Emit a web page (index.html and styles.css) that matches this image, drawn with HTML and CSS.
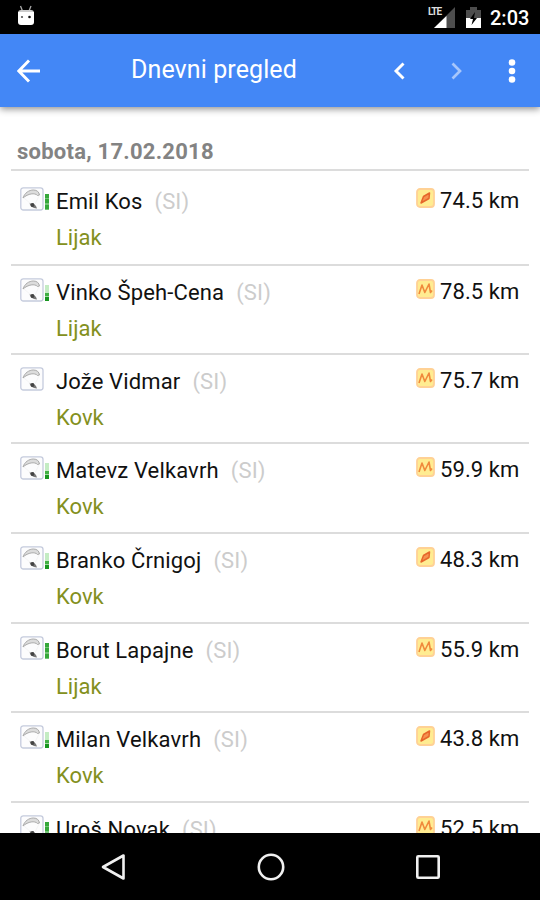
FILE: index.html
```
<!DOCTYPE html>
<html lang="sl">
<head>
<meta charset="utf-8">
<title>Dnevni pregled</title>
<link rel="stylesheet" href="styles.css">
</head>
<body>
<svg class="defs" width="0" height="0">
  <symbol id="glider" viewBox="0 0 24 24">
    <rect x=".8" y=".8" width="22.2" height="22.2" rx="2.500" fill="#fcfcfd" stroke="#c5cbdd" stroke-width="1.3"/>
    <path d="M3 11C4.500 6 9 3 13.500 3c3.500 0 5.500 2 6 5l-2 .5C15 5.500 8 6.500 3 11z" fill="#dcdcdc" stroke="#aaa" stroke-width="1"/>
    <path d="M4 11l7 6M19 9l-4 8" fill="none" stroke="#f0f0f0" stroke-width=".7"/>
    <path d="M9.500 16.500l4 0 2.500 2.500 1 2.500-3-.5-3-1.500z" fill="#777"/>
    <circle cx="12.500" cy="18" r="1.900" fill="#444"/>
  </symbol>
  <symbol id="triangle" viewBox="0 0 19 20">
    <rect x="1" y="1" width="17" height="18" rx="3" fill="#ffec91" stroke="#ffd195" stroke-width="1.800"/>
    <path d="M5 15l2.500-6.500L13.500 5l-.5 5.500z" fill="#f59350" stroke="#e6662b" stroke-width="1.500" stroke-linejoin="round"/>
  </symbol>
  <symbol id="zigzag" viewBox="0 0 19 20">
    <rect x="1" y="1" width="17" height="18" rx="3" fill="#ffec91" stroke="#ffd195" stroke-width="1.800"/>
    <path d="M3 15l3-9 2.800 7.500L13 5l1.500 8.500 1.500-2" fill="none" stroke="#f08a3c" stroke-width="1.600" stroke-linejoin="round"/>
  </symbol>
</svg>
<div class="screen">
  <div class="status">
    <svg class="robot" width="18" height="21" viewBox="0 0 18 21"><path d="M3.500 1l2 5M14 1l-2 5" stroke="#aaa" stroke-width="1.300"/><path d="M1 8q0-3 3-3h10q3 0 3 3z" fill="#ccc"/><path d="M1 7h16v10q0 3-3 3H4q-3 0-3-3z" fill="#fff"/><circle cx="5" cy="12" r="1.100" fill="#555"/><circle cx="12.500" cy="12" r="1.300" fill="#111"/></svg>
    <span class="lte">LTE</span>
    <svg class="signal" width="21" height="21" viewBox="0 0 21 21"><path d="M0 21L21 0v21z" fill="#4d4d4d"/><path d="M0 21L12.500 9v12z" fill="#fff"/><path d="M0 0h9v9H0z" fill="#000"/></svg>
    <svg class="battery" width="15" height="21" viewBox="0 0 15 21"><path d="M0 3h4V0h7v3h4v8H0z" fill="#4d4d4d"/><path d="M0 11h15v10H0z" fill="#fff"/><path d="M9 5L4 12h3l-1.500 6L11 11H8z" fill="#000"/></svg>
    <span class="clock">2:03</span>
  </div>
  <header class="bar">
    <svg class="back" width="24" height="24" viewBox="0 0 24 24"><path d="M23 12H2M12 1.500L1.800 12 12 22.500" fill="none" stroke="#fff" stroke-width="2.900"/></svg>
    <h1>Dnevni pregled</h1>
    <svg class="prev" width="12" height="18" viewBox="0 0 12 18"><path d="M10.500 1.500L3 9l7.500 7.500" fill="none" stroke="#fff" stroke-width="2.900"/></svg>
    <svg class="next" width="12" height="18" viewBox="0 0 12 18"><path d="M1.500 1.500L9 9l-7.500 7.500" fill="none" stroke="#a7c6fb" stroke-width="2.700"/></svg>
    <svg class="more" width="8" height="24" viewBox="0 0 8 24"><g fill="#fff"><circle cx="4" cy="3.500" r="3.300"/><circle cx="4" cy="12" r="3.300"/><circle cx="4" cy="20.500" r="3.300"/></g></svg>
  </header>
  <main>
    <h2><span>sobota, 17.02.2018</span></h2>
    <ul>
      <li><svg class="pic"><use href="#glider"/></svg><i class="meter full"></i><div class="who"><p class="name">Emil Kos<small>(SI)</small></p><p class="site">Lijak</p></div><svg class="kind"><use href="#triangle"/></svg><span class="km">74.5 km</span></li>
      <li><svg class="pic"><use href="#glider"/></svg><i class="meter half"></i><div class="who"><p class="name">Vinko Špeh-Cena<small>(SI)</small></p><p class="site">Lijak</p></div><svg class="kind"><use href="#zigzag"/></svg><span class="km">78.5 km</span></li>
      <li><svg class="pic"><use href="#glider"/></svg><i class="meter"></i><div class="who"><p class="name">Jože Vidmar<small>(SI)</small></p><p class="site">Kovk</p></div><svg class="kind"><use href="#zigzag"/></svg><span class="km">75.7 km</span></li>
      <li><svg class="pic"><use href="#glider"/></svg><i class="meter half"></i><div class="who"><p class="name">Matevz Velkavrh<small>(SI)</small></p><p class="site">Kovk</p></div><svg class="kind"><use href="#zigzag"/></svg><span class="km">59.9 km</span></li>
      <li><svg class="pic"><use href="#glider"/></svg><i class="meter half"></i><div class="who"><p class="name">Branko Črnigoj<small>(SI)</small></p><p class="site">Kovk</p></div><svg class="kind"><use href="#triangle"/></svg><span class="km">48.3 km</span></li>
      <li><svg class="pic"><use href="#glider"/></svg><i class="meter full"></i><div class="who"><p class="name">Borut Lapajne<small>(SI)</small></p><p class="site">Lijak</p></div><svg class="kind"><use href="#zigzag"/></svg><span class="km">55.9 km</span></li>
      <li><svg class="pic"><use href="#glider"/></svg><i class="meter half"></i><div class="who"><p class="name">Milan Velkavrh<small>(SI)</small></p><p class="site">Kovk</p></div><svg class="kind"><use href="#triangle"/></svg><span class="km">43.8 km</span></li>
      <li><svg class="pic"><use href="#glider"/></svg><i class="meter full"></i><div class="who"><p class="name">Uroš Novak<small>(SI)</small></p></div><svg class="kind"><use href="#zigzag"/></svg><span class="km">52.5 km</span></li>
    </ul>
  </main>
  <nav>
    <svg width="26" height="28" viewBox="0 0 26 28"><path d="M23.500 2.500v23L3 14z" fill="none" stroke="#f0f0f0" stroke-width="2.600" stroke-linejoin="round"/></svg>
    <svg width="28" height="28" viewBox="0 0 28 28"><circle cx="14" cy="14" r="12.200" fill="none" stroke="#f0f0f0" stroke-width="2.600"/></svg>
    <svg width="26" height="26" viewBox="0 0 26 26"><rect x="2.300" y="2.300" width="21.400" height="21.400" rx="1" fill="none" stroke="#f0f0f0" stroke-width="2.600"/></svg>
  </nav>
</div>
</body>
</html>
```
FILE: styles.css
```
* { box-sizing: border-box; margin: 0; padding: 0; }
body { font-family: Roboto, sans-serif; background: #fff; }
.defs { position: absolute; }
svg { flex: none; display: block; }
.screen { width: 540px; height: 900px; display: flex; flex-direction: column; overflow: hidden; }
.status { height: 34px; flex: none; background: #000; display: flex; align-items: flex-start; padding: 0 11px 0 17px; color: #fff; }
.robot { margin-top: 5px; }
.lte { margin-left: auto; margin-top: 6px; font-size: 10px; line-height: 12px; font-weight: 700; width: 14px; margin-right: -8px; letter-spacing: -1px; position: relative; z-index: 1; color: #ddd; }
.signal { margin-top: 7px; }
.battery { margin: 7px 0 0 11px; }
.clock { width: 39px; margin: 6px 0 0 9px; font-size: 20px; line-height: 24px; font-weight: 500; white-space: nowrap; }
.bar { height: 73px; flex: none; background: #4387f6; display: flex; align-items: center; padding: 0 24px 0 17px; box-shadow: 0 2px 7px rgba(0,0,0,.45); z-index: 1; color: #fff; }
.bar h1 { font-size: 25px; line-height: 30px; font-weight: 400; letter-spacing: .1px; margin: -1px 0 0 90px; width: 166px; white-space: nowrap; }
.prev { margin-left: 96px; }
.next { margin-left: 46px; }
.more { margin-left: auto; }
main { flex: 1; min-height: 0; overflow: hidden; padding: 0 11px; }
h2 { height: 62px; padding: 32px 0 0 6px; font-size: 22px; line-height: 26px; font-weight: 700; letter-spacing: .25px; color: #838383; white-space: nowrap; }
ul { list-style: none; }
li { height: 89.7px; border-top: 2px solid #dcdcdc; padding: 12px 9px 0; display: flex; align-items: flex-start; }
li:first-child { height: 94.500px; padding-top: 16px; }
li:nth-child(2) { height: 89px; }
.pic { width: 24px; height: 24px; }
.meter { width: 4px; height: 16px; margin: 7px 7px 0 1px; }
.full { background: repeating-linear-gradient(#36a83b 0 4px, #74c577 4px 5.300px); }
.half { background: linear-gradient(#c4ecc3 0 8px, #41b045 8px 11px, #a2d9a2 11px 12px, #189620 12px); }
.name, .site { font-size: 22px; line-height: 36px; white-space: nowrap; }
.name { color: #111; margin-top: -3px; letter-spacing: .14px; }
.name small { font-size: 22px; color: #ccc; margin-left: 12px; }
.site { color: #839020; }
.kind { width: 19px; height: 20px; margin: 1px 5px 0 auto; }
.km { font-size: 22px; line-height: 36px; margin-top: -4px; color: #111; letter-spacing: .1px; width: 80px; white-space: nowrap; }
nav { height: 67px; flex: none; background: #000; display: flex; align-items: center; justify-content: space-between; padding: 0 99px 0 100px; }
```
